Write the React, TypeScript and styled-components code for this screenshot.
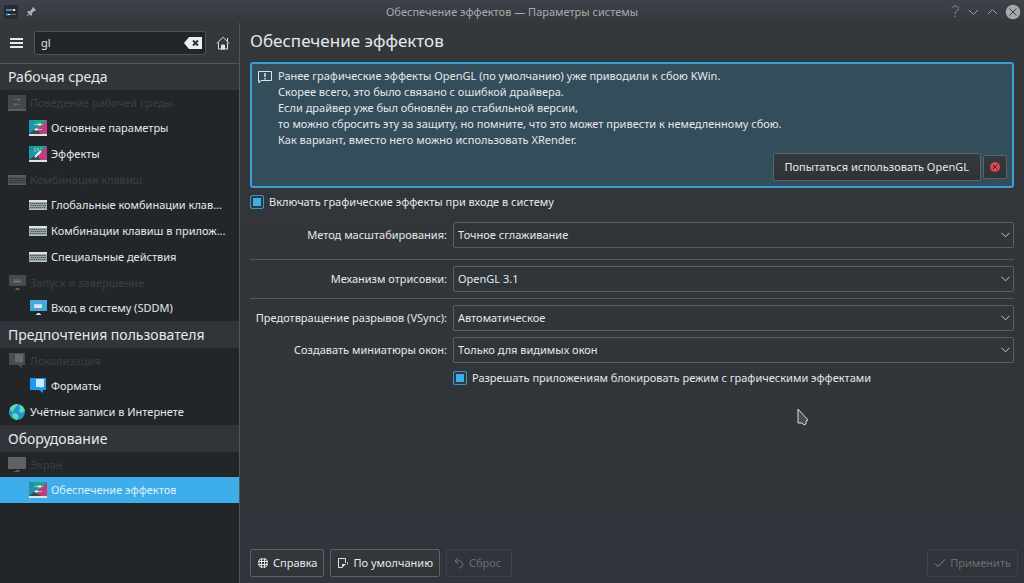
import React from 'react';
import styled, { createGlobalStyle, css } from 'styled-components';

const Global = createGlobalStyle`
  *, *::before, *::after { box-sizing: border-box; }
  body { margin: 0; background: #31353b; }
  body, button, input, select {
    font-family: "Noto Sans", "Open Sans", sans-serif;
    font-size: 11px;
    line-height: 16px;
    color: #e6e8e9;
  }
  button, input, select { margin: 0; }
`;

const Window = styled.div`
  min-height: 100vh;
  display: flex;
  flex-direction: column;
  background: linear-gradient(#3d424b 0, #33383c 24px, #323639 120px, #30353b 100%);
`;

const TitleBar = styled.header`
  display: grid;
  grid-template-columns: 1fr auto 1fr;
  align-items: center;
  height: 23px;
  padding: 0 3px;
  color: #a6aaad;
`;

const TitleTools = styled.div<{ $end?: boolean }>`
  display: flex;
  align-items: center;
  gap: 7px;
  justify-content: ${p => (p.$end ? 'flex-end' : 'flex-start')};
`;

const Caption = styled.div`
  white-space: nowrap;
`;

const PlainButton = styled.button`
  flex: none;
  display: flex;
  align-items: center;
  justify-content: center;
  padding: 0;
  border: 0;
  background: none;
`;

const Body = styled.div`
  flex: 1;
  display: flex;
`;

const Sidebar = styled.aside`
  flex: none;
  width: 240px;
  display: flex;
  flex-direction: column;
  border-right: 1px solid #50555a;
`;

const SearchBar = styled.div`
  display: flex;
  align-items: center;
  gap: 10px;
  height: 40px;
  padding: 0 9px;
`;

const SearchBox = styled.div`
  flex: 1;
  min-width: 0;
  display: flex;
  align-items: center;
  height: 24px;
  padding: 0 2px 0 6px;
  border: 1px solid #4d5256;
  border-radius: 2px;
  background: #222629;
`;

const SearchInput = styled.input`
  flex: 1;
  min-width: 0;
  padding: 0;
  border: 0;
  outline: 0;
  background: none;
`;

const Nav = styled.nav`
  flex: 1;
  background: #222629;
`;

const Section = styled.section`
  &:first-child > h2 { border-top: 1px solid #54595d; }
`;

const SectionTitle = styled.h2`
  display: flex;
  align-items: center;
  height: 27px;
  margin: 0;
  padding: 0 8px;
  background: #31353a;
  font-size: 14px;
  line-height: 20px;
  font-weight: 400;
`;

const List = styled.ul`
  margin: 0;
  padding: 0;
  list-style: none;
`;

const rowLayout = css`
  display: flex;
  align-items: center;
  gap: 4px;
`;

const Group = styled.li`
  ${rowLayout}
  height: 25px;
  padding: 0 8px;
  color: #3b3f42;
`;

const Entry = styled.a<{ $top?: boolean; $active?: boolean }>`
  ${rowLayout}
  height: 26px;
  padding: 0 8px 0 ${p => (p.$top ? 8 : 29)}px;
  color: ${p => (p.$active ? '#e0eff8' : '#e6e8e9')};
  background: ${p => (p.$active ? '#3daee9' : 'transparent')};
  text-decoration: none;
`;

const Label = styled.span`
  min-width: 0;
  overflow: hidden;
  text-overflow: ellipsis;
  white-space: nowrap;
`;

const Main = styled.main`
  flex: 1;
  min-width: 0;
  display: flex;
  flex-direction: column;
  padding: 0 10px;
`;

const PageTitle = styled.h1`
  margin: 0;
  padding: 5px 0 9px;
  font-size: 17px;
  line-height: 25px;
  font-weight: 400;
`;

const Message = styled.section`
  display: flex;
  flex-direction: column;
  padding: 4px 5px 5px 6px;
  border: 2px solid #3a9fd4;
  border-radius: 3px;
  background: #334d5b;
`;

const MessageText = styled.div`
  display: flex;
  gap: 6px;
  p { margin: 0; }
`;

const MessageActions = styled.div`
  display: flex;
  justify-content: flex-end;
  align-items: center;
  gap: 2px;
  margin-top: 5px;
`;

const Button = styled.button`
  display: flex;
  align-items: center;
  gap: 4px;
  height: 28px;
  min-width: 66px;
  padding: 0 6px;
  border: 1px solid #5d6266;
  border-radius: 2px;
  background: linear-gradient(#34393d, #2f3338);
  white-space: nowrap;
  &:disabled {
    color: #696d71;
    border-color: #3e4347;
    background: none;
  }
`;

const ActionButton = styled(Button)`
  padding: 0 11px;
`;

const CloseButton = styled(Button)`
  width: 24px;
  min-width: 0;
  height: 24px;
  padding: 0;
  justify-content: center;
`;

const CheckRow = styled.label`
  display: flex;
  align-items: center;
  gap: 5px;
  height: 16px;
`;

const Check = styled.input`
  appearance: none;
  width: 14px;
  height: 14px;
  border: 1px solid #3b94c4;
  border-radius: 2px;
  background: #2f4350;
  &:checked {
    background: #3daee9;
    box-shadow: inset 0 0 0 2px #2b3942;
  }
`;

const TopCheck = styled.div`
  padding: 6px 0 12px;
`;

const Form = styled.div`
  display: grid;
  grid-template-columns: minmax(197px, auto) 1fr;
  column-gap: 6px;
  row-gap: 6px;
  align-items: center;
`;

const FieldLabel = styled.label`
  text-align: right;
  white-space: nowrap;
`;

const Rule = styled.hr<{ $gap?: boolean }>`
  grid-column: 1 / -1;
  width: 100%;
  margin: ${p => (p.$gap ? 5 : 0)}px 0 0;
  border: 0;
  border-top: 1px solid #555a5e;
`;

const SelectBox = styled.div`
  display: grid;
  align-items: center;
  > * { grid-area: 1 / 1; }
  > svg { justify-self: end; margin-right: 4px; pointer-events: none; }
`;

const Select = styled.select`
  appearance: none;
  width: 100%;
  height: 26px;
  padding: 0 20px 0 4px;
  border: 1px solid #5a5f63;
  border-radius: 2px;
  background: #30353a;
`;

const FormCheck = styled.div`
  grid-column: 2;
  padding-top: 1px;
`;

const Footer = styled.footer`
  display: flex;
  gap: 6px;
  margin: auto -4px 0 0;
  padding: 12px 0 6px;
`;

const Push = styled.div`
  flex: 1;
`;

const Pointer = styled.svg`
  position: absolute;
  left: 797px;
  top: 408px;
  pointer-events: none;
`;

const IconSvg = styled.svg`
  flex: none;
`;

type Kind = 'sliders' | 'wand' | 'keyboard' | 'login' | 'speech' | 'globe' | 'monitor';

function iconArt(kind: Kind, dim?: boolean) {
  switch (kind) {
    case 'sliders':
    case 'wand':
      return (
        <>
          {dim ? (
            <path d="M0 1h18v14H0z" fill="#44474a" />
          ) : (
            <>
              <path d="M0 1h18L4 15H0z" fill="#1f93ad" />
              <path d="M4 1h14L9 9z" fill="#1fa58c" />
              <path d="M18 1v14h-7L8 10z" fill="#b8427f" />
              <path d="M0 15l6-5 6 5z" fill="#3e4a50" />
            </>
          )}
          <path d="M0 15h18v2H0z" fill={dim ? '#5a5d5f' : '#dfe3e4'} />
          {kind === 'sliders' ? (
            <g stroke={dim ? '#64676a' : '#e9eef0'}>
              <path d="M5 5.500h9M5 10.500h8" strokeOpacity=".6" />
              <path d="M9 5.500h3M6 10.500h3" strokeWidth="2" />
            </g>
          ) : (
            <g stroke="#eef2f3">
              <path d="M6 12l6-6" strokeWidth="2" />
              <path d="M6 3v2M9 3v3M12 3v1M5 6h2" strokeOpacity=".6" />
            </g>
          )}
        </>
      );
    case 'keyboard':
      return (
        <>
          <path d="M0 4h18v10H0z" fill={dim ? '#4d5052' : '#9aa6a5'} />
          <path d="M0 4h18v2H0z" fill={dim ? '#5a5d5f' : '#dde3e1'} />
          <path d="M0 13h18v1H0z" fill={dim ? '#5a5d5f' : '#b9c3c1'} />
          <path
            d="M1 7.500h16M2 9.500h15M1 11.500h3M5 11.500h7M13 11.500h4"
            stroke={dim ? '#333638' : '#4c5857'}
            strokeDasharray="1.400 .6"
          />
        </>
      );
    case 'login':
      return (
        <>
          <path d="M1 1h17v11H1z" fill={dim ? '#484b4d' : '#46a9dc'} />
          <path d="M5 5h8v4H5z" fill={dim ? '#5a5d5f' : '#c5dce8'} />
          <path d="M6 7.500h6" stroke={dim ? '#77797b' : '#f4f8fa'} />
          <path d="M8 14h3v1h1v1H7v-1h1z" fill={dim ? '#5a5d5f' : '#cfd3d4'} />
        </>
      );
    case 'monitor':
      return (
        <>
          <path d="M0 1h18v12H0z" fill="#5f6163" />
          <path d="M8 14h3v1h1v1H6v-1h2z" fill="#5a5d5f" />
        </>
      );
    case 'speech':
      return (
        <>
          <path d="M1 1h16v12h-3v3l-4-3H1z" fill={dim ? '#4a4d4f' : '#1d99f3'} />
          <path d="M7 2h8v8h-2v1l-2-1H7z" fill={dim ? '#666869' : '#cfe8fa'} />
        </>
      );
    case 'globe':
      return (
        <>
          <circle cx="9" cy="9" r="8" fill="#2396da" />
          <path
            d="M2 5c2-3 5-4 8-4L8 4 6 6 5 9 2 7zM4 11l4-1 3 3-2 4c-3-1-4-2-5-6zM11 2c3 0 5 3 6 6l-4 2-2-2 1-3z"
            fill="#62dba0"
          />
        </>
      );
  }
}

function ItemIcon({ kind, dim }: { kind: Kind; dim?: boolean }) {
  return (
    <IconSvg width="18" height="18" viewBox="0 0 18 18" aria-hidden="true">
      {iconArt(kind, dim)}
    </IconSvg>
  );
}

type Row = { text: string; icon: Kind; group?: boolean; top?: boolean; active?: boolean };

const sections: { title: string; rows: Row[] }[] = [
  {
    title: 'Рабочая среда',
    rows: [
      { text: 'Поведение рабочей среды', icon: 'sliders', group: true },
      { text: 'Основные параметры', icon: 'sliders' },
      { text: 'Эффекты', icon: 'wand' },
      { text: 'Комбинации клавиш', icon: 'keyboard', group: true },
      { text: 'Глобальные комбинации клав...', icon: 'keyboard' },
      { text: 'Комбинации клавиш в прилож...', icon: 'keyboard' },
      { text: 'Специальные действия', icon: 'keyboard' },
      { text: 'Запуск и завершение', icon: 'login', group: true },
      { text: 'Вход в систему (SDDM)', icon: 'login' },
    ],
  },
  {
    title: 'Предпочтения пользователя',
    rows: [
      { text: 'Локализация', icon: 'speech', group: true },
      { text: 'Форматы', icon: 'speech' },
      { text: 'Учётные записи в Интернете', icon: 'globe', top: true },
    ],
  },
  {
    title: 'Оборудование',
    rows: [
      { text: 'Экран', icon: 'monitor', group: true },
      { text: 'Обеспечение эффектов', icon: 'sliders', active: true },
    ],
  },
];

function Field({ id, label, value }: { id: string; label: string; value: string }) {
  return (
    <>
      <FieldLabel htmlFor={id}>{label}</FieldLabel>
      <SelectBox>
        <Select id={id}>
          <option>{value}</option>
        </Select>
        <svg width="9" height="6" viewBox="0 0 9 6" fill="none" stroke="#c9ccce" aria-hidden="true">
          <path d="M.5.8l4 4 4-4" />
        </svg>
      </SelectBox>
    </>
  );
}

export default function App() {
  return (
    <Window>
      <Global />
      <TitleBar>
        <TitleTools>
          <svg width="16" height="14" viewBox="0 0 16 14" aria-hidden="true">
            <path d="M1 0h14v14H1z" fill="#262b2f" />
            <path d="M3 5h6M3 9.500h3" stroke="#3daee9" strokeWidth="1.500" />
            <path d="M9 5h4M6 9.500h7" stroke="#6b7175" />
            <path d="M10 4h2v2h-2zM5 9h2v1H5z" fill="#eceeef" />
          </svg>
          <PlainButton aria-label="Закрепить">
            <svg width="11" height="11" viewBox="0 0 11 11" aria-hidden="true">
              <path d="M7 1l3 3-1 1-1 0-2 2 0 2-1 1-4-4 1-1 2 0 2-2 0-1z" fill="#a9adb0" />
              <path d="M3.500 7.500L1 10" stroke="#a9adb0" />
            </svg>
          </PlainButton>
        </TitleTools>
        <Caption>Обеспечение эффектов — Параметры системы</Caption>
        <TitleTools $end>
          <PlainButton aria-label="Справка по окну">
            <svg width="10" height="13" viewBox="0 0 10 13" fill="none" stroke="#8d9194" aria-hidden="true">
              <path d="M2 3.500C2 .3 8.500.3 8.500 3.500 8.500 6 5 5.500 5 9M5 10.500v1.500" />
            </svg>
          </PlainButton>
          <PlainButton aria-label="Свернуть">
            <svg width="12" height="12" viewBox="0 0 12 12" fill="none" stroke="#a1a5a8" aria-hidden="true">
              <path d="M2 4l4.500 4.500L11 4" />
            </svg>
          </PlainButton>
          <PlainButton aria-label="Развернуть">
            <svg width="12" height="12" viewBox="0 0 12 12" fill="none" stroke="#a1a5a8" aria-hidden="true">
              <path d="M2 8l4.500-4.500L11 8" />
            </svg>
          </PlainButton>
          <PlainButton aria-label="Закрыть">
            <svg width="16" height="16" viewBox="0 0 16 16" aria-hidden="true">
              <circle cx="8" cy="8" r="7.300" fill="#a5a9ac" />
              <path d="M4.500 4.500l7 7M11.500 4.500l-7 7" stroke="#34393e" />
            </svg>
          </PlainButton>
        </TitleTools>
      </TitleBar>
      <Body>
        <Sidebar>
          <SearchBar>
            <PlainButton aria-label="Меню">
              <svg width="15" height="12" viewBox="0 0 15 12" aria-hidden="true">
                <path d="M1 1h13v2H1zM1 5h13v2H1zM1 9h13v2H1z" fill="#e6e8e9" />
              </svg>
            </PlainButton>
            <SearchBox>
              <SearchInput aria-label="Поиск" defaultValue="gl" />
              <PlainButton aria-label="Очистить">
                <svg width="19" height="14" viewBox="0 0 19 14" aria-hidden="true">
                  <path d="M0 7l5-6h13v12H5z" fill="#eceeef" />
                  <path d="M9 4.500l5 5M14 4.500l-5 5" stroke="#2b2f33" strokeWidth="1.800" />
                </svg>
              </PlainButton>
            </SearchBox>
            <PlainButton aria-label="Домой">
              <svg width="14" height="14" viewBox="0 0 14 14" fill="none" stroke="#e0e2e3" aria-hidden="true">
                <path d="M.8 7.500L7 1.200l6.200 6.300M2.500 6.500v6.500h9V6.500M11.500 2v3" />
                <path d="M5.500 13V9h3v4z" fill="#e0e2e3" />
              </svg>
            </PlainButton>
          </SearchBar>
          <Nav>
            {sections.map(s => (
              <Section key={s.title}>
                <SectionTitle>{s.title}</SectionTitle>
                <List>
                  {s.rows.map(r =>
                    r.group ? (
                      <Group key={r.text}>
                        <ItemIcon kind={r.icon} dim />
                        <Label>{r.text}</Label>
                      </Group>
                    ) : (
                      <li key={r.text}>
                        <Entry href="#" $top={r.top} $active={r.active}>
                          <ItemIcon kind={r.icon} />
                          <Label>{r.text}</Label>
                        </Entry>
                      </li>
                    )
                  )}
                </List>
              </Section>
            ))}
          </Nav>
        </Sidebar>
        <Main>
          <PageTitle>Обеспечение эффектов</PageTitle>
          <Message>
            <MessageText>
              <svg width="14" height="16" viewBox="0 0 14 16" fill="none" stroke="#dfe3e5" aria-hidden="true">
                <path d="M.5 13.500v-10h13v9H3M1 12v3l2-2.500" />
                <path d="M7 5v4M7 10v1.500" strokeWidth="1.500" />
              </svg>
              <p>
                Ранее графические эффекты OpenGL (по умолчанию) уже приводили к сбою KWin.<br />
                Скорее всего, это было связано с ошибкой драйвера.<br />
                Если драйвер уже был обновлён до стабильной версии,<br />
                то можно сбросить эту за защиту, но помните, что это может привести к немедленному сбою.<br />
                Как вариант, вместо него можно использовать XRender.
              </p>
            </MessageText>
            <MessageActions>
              <ActionButton>Попытаться использовать OpenGL</ActionButton>
              <CloseButton aria-label="Закрыть сообщение">
                <svg width="10" height="10" viewBox="0 0 10 10" aria-hidden="true">
                  <circle cx="5" cy="5" r="5" fill="#da4453" />
                  <path d="M3 3l4 4M7 3L3 7" stroke="#40272d" />
                </svg>
              </CloseButton>
            </MessageActions>
          </Message>
          <TopCheck>
            <CheckRow>
              <Check type="checkbox" defaultChecked />
              Включать графические эффекты при входе в систему
            </CheckRow>
          </TopCheck>
          <Form>
            <Field id="scale" label="Метод масштабирования:" value="Точное сглаживание" />
            <Rule $gap />
            <Field id="backend" label="Механизм отрисовки:" value="OpenGL 3.1" />
            <Rule />
            <Field id="vsync" label="Предотвращение разрывов (VSync):" value="Автоматическое" />
            <Field id="thumbs" label="Создавать миниатюры окон:" value="Только для видимых окон" />
            <FormCheck>
              <CheckRow>
                <Check type="checkbox" defaultChecked />
                Разрешать приложениям блокировать режим с графическими эффектами
              </CheckRow>
            </FormCheck>
          </Form>
          <Footer>
            <Button>
              <svg width="12" height="12" viewBox="0 0 12 12" fill="none" stroke="#dfe1e2" aria-hidden="true">
                <rect x="2" y="2" width="8" height="8" rx="2" />
                <path d="M4.500 1v10M7.500 1v10M1 4.500h10M1 7.500h10" />
              </svg>
              Справка
            </Button>
            <Button>
              <svg width="12" height="12" viewBox="0 0 12 12" fill="none" stroke="#dfe1e2" aria-hidden="true">
                <path d="M5 10.500H1.500v-9h7V6" />
                <path d="M5 11V7h4z" fill="#dfe1e2" stroke="none" />
                <path d="M10.500 5.500v2" />
              </svg>
              По умолчанию
            </Button>
            <Button disabled>
              <svg width="12" height="12" viewBox="0 0 12 12" fill="none" stroke="#73777a" aria-hidden="true">
                <path d="M5 1L2 4l3 3M2 4h4.500c4.500 0 4.500 7-1 7" />
              </svg>
              Сброс
            </Button>
            <Push />
            <Button disabled>
              <svg width="12" height="12" viewBox="0 0 12 12" fill="none" stroke="#8a8e91" aria-hidden="true">
                <path d="M1 6.500l3 3L11 2.500" />
              </svg>
              Применить
            </Button>
          </Footer>
        </Main>
      </Body>
      <Pointer width="12" height="18" viewBox="0 0 12 18" aria-hidden="true">
        <path d="M1 1v14h4l2 2 2-1v-3l2-1z" fill="#4a4d4f" stroke="#d9dbdc" />
      </Pointer>
    </Window>
  );
}
